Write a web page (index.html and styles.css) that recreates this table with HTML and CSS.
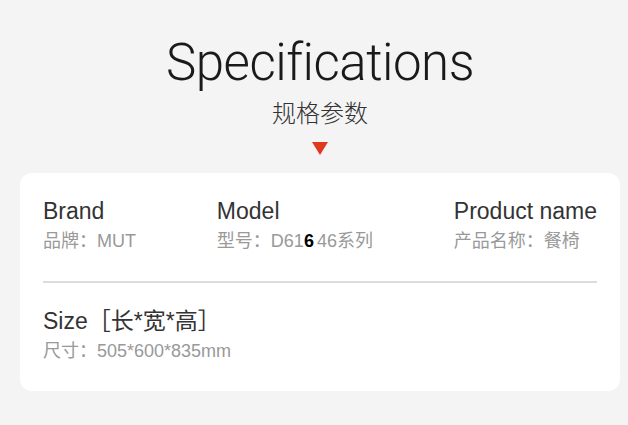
FILE: index.html
```html
<!DOCTYPE html>
<html lang="zh-CN">
<head>
<meta charset="utf-8">
<link rel="stylesheet" href="styles.css">
</head>
<body>
<div class="page">
  <header class="head">
    <h1 class="title">Specifications</h1>
    <p class="subtitle">规格参数</p>
    <span class="arrow"></span>
  </header>
  <section class="card">
    <div class="row">
      <div class="item">
        <div class="label">Brand</div>
        <div class="value">品牌：MUT</div>
      </div>
      <div class="item">
        <div class="label">Model</div>
        <div class="value">型号：D61<b class="glitch">6</b><span class="gap">46系列</span></div>
      </div>
      <div class="item">
        <div class="label">Product name</div>
        <div class="value">产品名称：餐椅</div>
      </div>
    </div>
    <hr class="divider">
    <div class="item">
      <div class="label">Size［长*宽*高］</div>
      <div class="value">尺寸：505*600*835mm</div>
    </div>
  </section>
</div>
</body>
</html>
```
FILE: styles.css
```css
html, body {
  margin: 0;
  padding: 0;
  background: #f4f4f4;
}
.page {
  width: 628px;
  height: 425px;
  font-family: "Liberation Sans", "Noto Sans CJK SC", sans-serif;
  padding: 31px 8px 0 20px;
  box-sizing: border-box;
}
.head {
  display: flex;
  flex-direction: column;
  align-items: center;
}
.title {
  margin: 0;
  font-family: Roboto, Inter, sans-serif;
  font-weight: 300;
  font-size: 51px;
  letter-spacing: -0.5px;
  line-height: 64px;
  color: #1a1a1a;
}
.subtitle {
  margin: 2px 0 0;
  font-family: "Noto Sans CJK SC", sans-serif;
  font-weight: 300;
  font-size: 24px;
  line-height: 30px;
  color: #333;
}
.arrow {
  margin-top: 15px;
  width: 0;
  height: 0;
  border-left: 8px solid transparent;
  border-right: 8px solid transparent;
  border-top: 13px solid #e03a1e;
}
.card {
  margin-top: 18px;
  background: #fff;
  border-radius: 12px;
  height: 218px;
  box-sizing: border-box;
  padding: 24px 23px 0;
}
.row {
  display: flex;
  justify-content: space-between;
}
.label {
  font-size: 23px;
  line-height: 28px;
  color: #333;
}
.value {
  margin-top: 4px;
  font-size: 18px;
  line-height: 24px;
  color: #999;
}
.value .glitch {
  color: #000;
  font-weight: 700;
}
.gap {
  margin-left: 3px;
}
.divider {
  border: 0;
  height: 2px;
  background: #dcdcdc;
  margin: 28px 0 24px;
}
```
